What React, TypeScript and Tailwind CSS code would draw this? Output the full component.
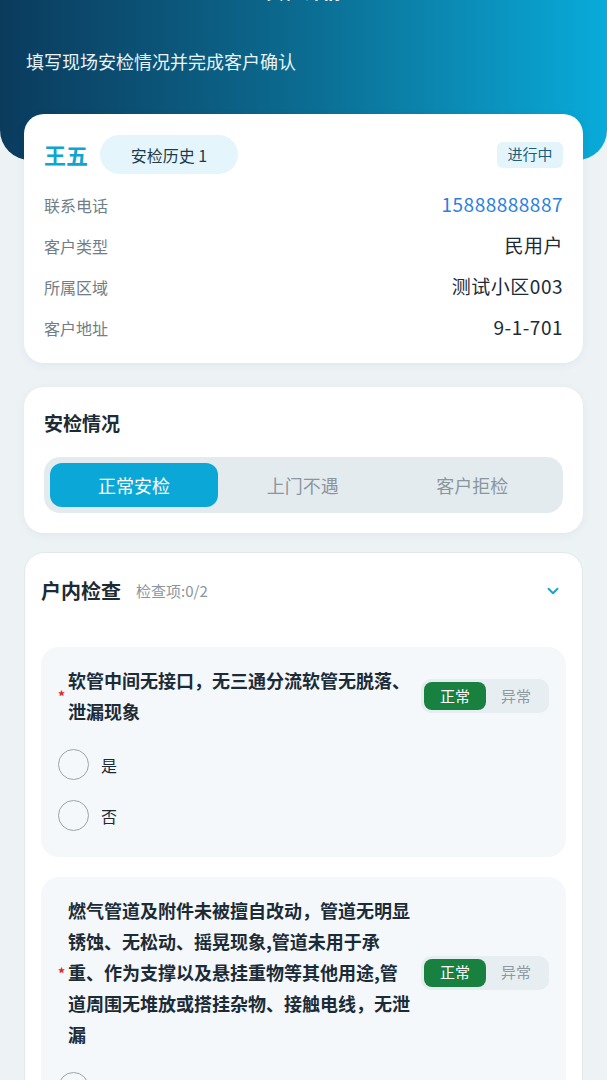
import { ChevronDown } from 'lucide-react';

const font = { fontFamily: '"Noto Sans CJK SC", "Noto Sans", sans-serif' };

const infoRows = [
  { label: '联系电话', value: '15888888887', blue: true },
  { label: '客户类型', value: '民用户' },
  { label: '所属区域', value: '测试小区003' },
  { label: '客户地址', value: '9-1-701' },
];

const checkItems = [
  { text: '软管中间无接口，无三通分流软管无脱落、泄漏现象' },
  {
    text: '燃气管道及附件未被擅自改动，管道无明显锈蚀、无松动、摇晃现象,管道未用于承重、作为支撑以及悬挂重物等其他用途,管道周围无堆放或搭挂杂物、接触电线，无泄漏',
  },
];

function CheckItem({ text }: { text: string }) {
  return (
    <div className="rounded-[18px] bg-[#f4f8fb] pl-[17px] pr-[17px] pt-[18px] pb-[26px]">
      <div className="flex items-center">
        <span className="w-[10px] shrink-0 text-[14px] leading-none text-[#e02424] font-bold">*</span>
        <p className="w-[343px] shrink-0 text-[18px] leading-[31px] font-bold text-[#1c2b36]">{text}</p>
        <div className="ml-auto flex h-[34px] w-[128px] items-center rounded-[10px] bg-[#e7eef1] p-[3px]">
          <div className="flex h-[28px] w-[62px] items-center justify-center rounded-[8px] bg-[#18813f] text-[15px] text-white">
            正常
          </div>
          <div className="flex h-[28px] flex-1 items-center justify-center text-[15px] text-[#8d989f]">异常</div>
        </div>
      </div>
      <div className="mt-[22px] flex flex-col gap-[20px]">
        {['是', '否'].map((o) => (
          <div key={o} className="flex items-center">
            <span className="h-[31px] w-[31px] rounded-full border-[1.5px] border-[#9ca5aa] bg-transparent" />
            <span className="ml-[12px] text-[16px] text-[#1f2933]">{o}</span>
          </div>
        ))}
      </div>
    </div>
  );
}

export default function App() {
  return (
    <div className="min-h-screen bg-[#edf2f5] pb-10" style={font}>
      {/* header */}
      <div className="h-[160px] overflow-hidden rounded-b-[30px] bg-gradient-to-r from-[#0a3b5d] via-[#0b6c91] to-[#08abda] px-[26px]">
        <div className="-mt-[21px] text-center text-[19px] font-bold leading-[24px] text-white">安检详情</div>
        <p className="mt-[45px] text-[18px] leading-[26px] text-[#e8f3f8]">填写现场安检情况并完成客户确认</p>
      </div>

      {/* customer card */}
      <div className="relative mx-[24px] -mt-[46px] rounded-[20px] bg-white px-[20px] pt-[21px] pb-[15px] shadow-[0_2px_10px_rgba(15,60,90,0.06)]">
        <div className="flex h-[39px] items-center">
          <span className="text-[22px] font-bold text-[#0ea5d0]">王五</span>
          <span className="ml-[12px] flex h-[39px] w-[138px] items-center justify-center rounded-full bg-[#e4f6fc] text-[16px] text-[#1e3b4c]">
            安检历史 1
          </span>
          <span className="ml-auto flex h-[26px] w-[66px] items-center justify-center rounded-[6px] bg-[#e3f4fa] text-[15px] text-[#1c5f7c]">
            进行中
          </span>
        </div>
        <div className="mt-[10px]">
          {infoRows.map((r) => (
            <div key={r.label} className="flex h-[41px] items-center justify-between">
              <span className="text-[16px] text-[#6f7e88]">{r.label}</span>
              <span className={`text-[19px] tracking-[0.5px] ${r.blue ? 'text-[#2b7fe0]' : 'text-[#1c2b36]'}`}>{r.value}</span>
            </div>
          ))}
        </div>
      </div>

      {/* status card */}
      <div className="mx-[24px] mt-[24px] rounded-[20px] bg-white px-[20px] pt-[24px] pb-[20px] shadow-[0_2px_10px_rgba(15,60,90,0.06)]">
        <h2 className="text-[19px] font-bold leading-[24px] text-[#1c2b36]">安检情况</h2>
        <div className="mt-[22px] flex h-[56px] items-center rounded-[16px] bg-[#e4ebef] p-[6px]">
          <div className="flex h-[44px] w-[168px] items-center justify-center rounded-[12px] bg-[#0ba8d7] text-[18px] text-white">
            正常安检
          </div>
          <div className="flex flex-1 items-center justify-center text-[18px] text-[#8a969e]">上门不遇</div>
          <div className="flex flex-1 items-center justify-center text-[18px] text-[#8a969e]">客户拒检</div>
        </div>
      </div>

      {/* indoor check */}
      <div className="mx-[24px] mt-[19px] rounded-[20px] border border-[#e1e9ee] bg-white px-[16px] pt-[23px] pb-[20px]">
        <div className="flex h-[30px] items-center">
          <span className="text-[20px] font-bold text-[#1c2b36]">户内检查</span>
          <span className="ml-[15px] text-[15px] text-[#8a969e]">检查项:0/2</span>
          <ChevronDown className="ml-auto mr-[4px] text-[#0ea5d0]" size={18} strokeWidth={2.5} />
        </div>
        <div className="mt-[41px] flex flex-col gap-[20px]">
          {checkItems.map((c, i) => (
            <CheckItem key={i} text={c.text} />
          ))}
        </div>
      </div>
    </div>
  );
}
